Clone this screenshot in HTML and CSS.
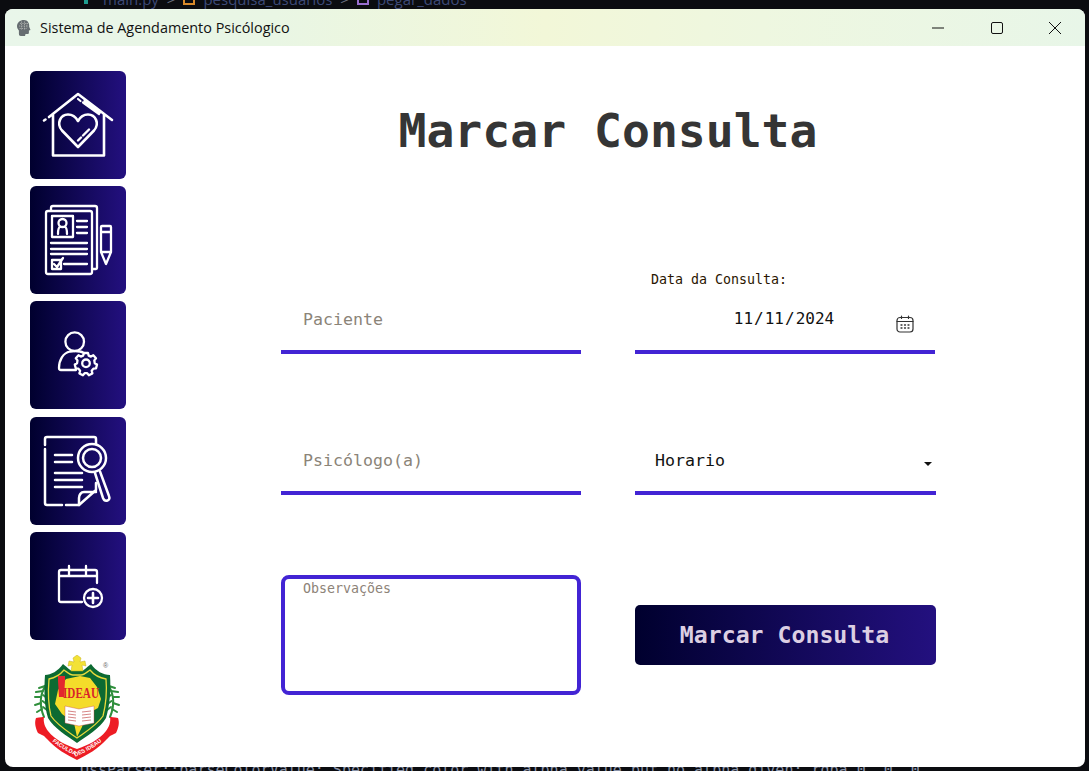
FILE: index.html
```html
<!DOCTYPE html>
<html lang="pt">
<head>
<meta charset="utf-8">
<title>Sistema de Agendamento Psicólogico</title>
<link rel="stylesheet" href="styles.css">
</head>
<body>
<div class="backdrop backdrop-top">
  <svg class="crumb-icon" viewBox="0 0 12 12"><path d="M2 1h8v5H7v5H3V7H2z" fill="#1f9d8f"/></svg>
  <span class="crumb crumb-main">main.py</span><span class="crumb-sep">&gt;</span>
  <svg class="crumb-icon" viewBox="0 0 12 12"><rect x="1" y="1" width="10" height="10" fill="none" stroke="#d98a2b" stroke-width="2"/></svg>
  <span class="crumb">pesquisa_usuarios</span><span class="crumb-sep">&gt;</span>
  <svg class="crumb-icon" viewBox="0 0 12 12"><rect x="1" y="1" width="10" height="10" fill="none" stroke="#9a6fd0" stroke-width="2"/></svg>
  <span class="crumb">pegar_dados</span>
</div>
<div class="backdrop backdrop-bottom">QssParser::parseColorValue: Specified color with alpha value but no alpha given: rgba 0, 0, 0</div>
<div class="window">
  <header class="titlebar">
    <svg class="app-icon" viewBox="0 0 14 16"><path d="M7 0C3 0 0 2.600 0 6.300c0 1.800.8 3 1.900 4.200V14c0 1.200.7 2 1.900 2H8l.5-2h1.900c1 0 1.500-.7 1.500-1.600v-1.800l1.600-.6-1.300-3.200C12.600 2.800 10.400 0 7 0z" fill="#666d71"/><path d="M3 3.500h8M2 6h9M2.500 8.500h7.500M4.500 1.500v8M7.500 1.500v8M10 3v5" stroke="#b3b6b2" stroke-width=".8" stroke-dasharray="1.300 1" fill="none"/></svg>
    <span class="title-text">Sistema de Agendamento Psicólogico</span>
    <div class="controls">
      <svg viewBox="0 0 12 12"><path d="M0 6h12" stroke="#111" stroke-width="1"/></svg>
      <svg viewBox="0 0 12 12"><rect x=".5" y=".5" width="11" height="11" rx="1.500" fill="none" stroke="#111" stroke-width="1"/></svg>
      <svg viewBox="0 0 12 12"><path d="M0 0l12 12M12 0L0 12" stroke="#111" stroke-width="1"/></svg>
    </div>
  </header>
  <div class="body">
    <nav class="sidebar">
      <button class="nav-btn" aria-label="Início">
        <svg class="nav-icon" viewBox="0 0 96 108" stroke-width="2.600">
          <path d="M14 49.500l1.500-1M19 46L48 23l34 26M23 43.500V84.500h51V43"/>
          <path d="M48 28l2.500 2M53 31.500L69 43M54.500 30L70 41.500" stroke-width="2.200"/>
          <path d="M48 76L32 59.500c-6-7-1.500-16 6-16 4.500 0 7.500 2 10 6.500 2.500-4.500 5.500-6.500 10-6.500 7.500 0 12 9 6 16z"/>
          <path d="M48 69.500l3-3M53 64.500l6-6" stroke-width="2.400"/>
        </svg>
      </button>
      <button class="nav-btn" aria-label="Pacientes">
        <svg class="nav-icon" viewBox="0 0 96 108" stroke-width="2.300">
          <path d="M21 24v-2c0-1 .7-2 2-2h42c1.300 0 2 1 2 2v60c0 .8-.5 1-1 1h-3"/>
          <path d="M16 27c0-1.200.8-2 2-2h42c1.200 0 2 .8 2 2v59c0 1.200-.8 2-2 2H18c-1.200 0-2-.8-2-2zM16 70v-4"/>
          <rect x="22" y="30" width="21" height="21"/>
          <circle cx="32.500" cy="37" r="4"/>
          <path d="M28 48c0-4 .5-6.500 2-7M37 48c0-4-.5-6.500-2-7"/>
          <path d="M47 35h10M47 41h10M47 47h10M21 57h36M21 63h36M21 68h36M34 78h23"/>
          <path d="M22 74h9v9h-9zM24 78l3 3 6-9"/>
          <path d="M72 40h8c.5 0 1 .5 1 1v25l-5 12-5-12V41c0-.5.500-1 1-1zM71 46h10M71 66h10"/>
        </svg>
      </button>
      <button class="nav-btn" aria-label="Usuários">
        <svg class="nav-icon" viewBox="0 0 96 108" stroke-width="2.300">
          <circle cx="44.700" cy="40.700" r="9.300"/>
          <path d="M46 69H31c-1.200 0-2-.8-2-2 0-8 4-15 11-16.500 3-.5 7-.5 10 0 1.500.3 3 1 4 1.500"/>
          <circle cx="56" cy="62.300" r="3.800"/>
          <path d="M54 52h4l.7 2.600 2.300 1 2.300-1.300 2.700 3-1.700 2.100.4 2.800 2.300 1.400-1 3.800-2.600.2-1.700 2.200.7 2.600-3.500 1.800-1.700-2-2.600 0-1.700 2-3.500-1.800.7-2.600-1.700-2.200-2.600-.2-1-3.800 2.300-1.400.4-2.800-1.700-2.100 2.700-3 2.300 1.300 2.300-1z"/>
        </svg>
      </button>
      <button class="nav-btn" aria-label="Pesquisa">
        <svg class="nav-icon" viewBox="0 0 96 108" stroke-width="2.500">
          <path d="M15 28v-6c0-1.200.8-2 2-2h47c1.300 0 2 .8 2 2v5M15 32v54c0 1.200.8 2 2 2h15M36 88h13l17-15v-7"/>
          <path d="M49 88v-7c0-3 2-6 5-6h12"/>
          <path d="M25 38h17M25 45h17M25 56h27M25 63h27M25 70h27"/>
          <circle cx="62" cy="41" r="14"/><circle cx="62" cy="41" r="9"/>
          <path d="M65 56l8 25c1 2.500 3 3 4.500 2.500s2.500-2 1.500-4.500L70 54.500"/>
        </svg>
      </button>
      <button class="nav-btn" aria-label="Marcar consulta">
        <svg class="nav-icon" viewBox="0 0 96 108" stroke-width="2.300">
          <path d="M52 70H31c-1.200 0-2-.8-2-2V40c0-1.200.8-2 2-2h34c1.200 0 2 .8 2 2v11M29 44h38M39 34v9M56 34v9"/>
          <circle cx="63" cy="66" r="9"/>
          <path d="M63 61v10M58 66h10" stroke-width="2.600"/>
        </svg>
      </button>
      <svg class="logo" viewBox="0 0 90 108">
        <g class="wreath">
          <path d="M14 28C7 38 6 50 11 62M74 28c7 10 8 22 3 34"/>
          <path d="M12 31l-6 2M10 36l-7 1M8 42l-6 0M8 48l-6 2M9 54l-5 3M12 34l3 4M10 40l4 3M9.500 46l4 3M10 52l4 3M76 31l6 2M78 36l7 1M80 42l6 0M80 48l6 2M79 54l5 3M76 34l-3 4M78 40l-4 3M78.500 46l-4 3M78 52l-4 3"/>
        </g>
        <path d="M12 20c6 0 13-4 18-11 3 2 7 7 10 7h8c3 0 7-5 10-7 5 7 12 11 19 11 1 14 0 30-4 43-6 10-19 18-29 25-10-7-23-15-29-25-4-13-4-29-3-43z" fill="#0c6a32"/>
        <path d="M16 24c5-1 11-4 15-9 3 2 6 5 9 5h8c3 0 6-3 9-5 4 5 10 8 16 9 1 12 0 25-3 37-6 9-16 15-26 22-10-7-20-13-26-22-3-12-3-25-2-37z" fill="none" stroke="#e9da3c" stroke-width="1.300"/>
        <path d="M44 0l4 3-1 4 5-1 1 5-4-1 1 6h-12l1-6-4 1 1-5 5 1-1-4z" fill="#f3e236" stroke="#c7b021" stroke-width=".5"/>
        <path d="M33 24l14-3 10 2 7 9 4 12-3 9-13 7-3 12-5 10-3-14-12-9-7-10 3-14z" fill="#f4dc2a"/>
        <path d="M25 21h7v5l-1 16h-5l-1-16z" fill="#e3282e"/>
        <text x="30" y="43" class="logo-word" textLength="36" lengthAdjust="spacingAndGlyphs">IDEAU</text>
        <path d="M32 51l14 3 15-3v17l-15 3-14-3z" fill="#fff" stroke="#c44" stroke-width=".4"/>
        <path d="M35 56l8 1M35 59l8 1M35 62l8 1M35 65l8 1M49 57l9-1M49 60l9-1M49 63l9-1M49 66l9-1" stroke="#b33" stroke-width=".6"/>
        <path d="M3 63c4-1 7-1 8-1-1 5 1 10 4 14 7 9 18 14 29 18 11-4 22-9 29-18 3-4 5-9 4-14 1 0 4 0 8 1 2 5 0 11-2 15l-6 3-3 3c-9 10-20 16-30 21-10-5-21-11-30-21l-3-3-6-3c-2-4-4-10-2-15z" fill="#ed1c24"/>
        <path id="ribbon" d="M13 81c9 9 20 15 31 20 11-5 22-11 31-20" fill="none"/>
        <text class="logo-ribbon"><textPath href="#ribbon" startOffset="50%" text-anchor="middle">FACULDADES IDEAU</textPath></text>
        <text x="70" y="13" class="logo-reg">®</text>
      </svg>
    </nav>
    <main class="content">
      <h1 class="page-title">Marcar Consulta</h1>
      <form class="form">
        <div class="field"><input class="input" type="text" placeholder="Paciente"></div>
        <div class="field date-field">
          <label class="date-label" for="data">Data da Consulta:</label>
          <input class="input input-date" id="data" type="date" value="2024-11-11">
          <svg class="cal-icon" viewBox="0 0 18 18" fill="none" stroke="#333" stroke-width="1.200" stroke-linecap="round"><rect x="1" y="2.500" width="16" height="14.500" rx="3"/><path d="M1 6.500h16M5.500 1v2.500M12.500 1v2.500"/><path d="M5 10h1M8.500 10h1M12 10h1M5 13h1M8.500 13h1M12 13h1" stroke-width="1.300"/></svg>
        </div>
        <div class="field"><input class="input" type="text" placeholder="Psicólogo(a)"></div>
        <div class="field select-field">
          <select class="input input-select"><option>Horario</option></select>
          <span class="caret"></span>
        </div>
        <textarea class="notes" placeholder="Observações"></textarea>
        <button class="submit" type="button">Marcar Consulta</button>
      </form>
    </main>
  </div>
</div>
</body>
</html>
```
FILE: styles.css
```css
* { box-sizing: border-box; }
html, body { height: 100%; }
body {
  margin: 0;
  background: #0b0c10;
  padding: 9px 4px 4px 5px;
  overflow: hidden;
  font-family: "DejaVu Sans Mono", monospace;
}
.backdrop {
  position: absolute;
  color: #3d4a78;
  white-space: nowrap;
}
.backdrop-top {
  top: -11px;
  left: 81px;
  display: flex;
  align-items: center;
  font: 15px "Open Sans", sans-serif;
}
.crumb-icon { width: 12px; height: 12px; margin-right: 8px; }
.crumb-main { margin-left: 2px; }
.crumb-sep { margin: 0 8px; color: #6a7080; }
.backdrop-bottom {
  bottom: -8px;
  left: 80px;
  font-size: 15px;
  color: #8a93a8;
}
.window {
  position: relative;
  height: 100%;
  display: flex;
  flex-direction: column;
  background: #fff;
  border-radius: 8px;
  overflow: hidden;
}
.titlebar {
  height: 37px;
  flex: none;
  display: flex;
  align-items: center;
  padding-left: 12px;
  background: linear-gradient(90deg, #e9f6ea 0%, #e9f6e4 25%, #f2f7d8 50%, #eef7e0 70%, #e8f6e8 100%);
}
.app-icon { width: 14px; height: 16px; margin-right: 9px; }
.title-text {
  font-family: "Open Sans", sans-serif;
  font-size: 14.400px;
  color: #111;
}
.controls {
  margin-left: auto;
  display: flex;
  align-items: center;
  gap: 46.500px;
  padding-right: 24px;
}
.controls svg { width: 12px; height: 12px; display: block; }
.body { flex: 1; display: flex; min-height: 0; }
.sidebar {
  width: 121px;
  flex: none;
  padding: 25px 0 0 25px;
  display: flex;
  flex-direction: column;
  gap: 7.200px;
}
.nav-btn {
  width: 96px;
  height: 108px;
  flex: none;
  padding: 0;
  border: 0;
  border-radius: 6px;
  background: linear-gradient(90deg, #00002e 0%, #23107f 100%);
}
.nav-icon {
  display: block;
  width: 96px;
  height: 108px;
  fill: none;
  stroke: #fff;
  stroke-linecap: round;
  stroke-linejoin: round;
}
.logo { width: 90px; height: 108px; margin: 7.800px 0 0 3px; flex: none; }
.wreath { fill: none; stroke: #2f8f3c; stroke-width: 2; stroke-linecap: round; }
.logo-word { font: 700 14px "Liberation Serif", serif; fill: #d9232a; }
.logo-ribbon { font: 700 5.600px "Liberation Sans", sans-serif; fill: #fff; }
.logo-reg { font: 7px "Liberation Sans", sans-serif; fill: #666; }
.content { flex: 1; min-width: 0; padding-left: 155px; display: flex; flex-direction: column; }
.page-title {
  margin: 50px 0 0;
  width: 654px;
  font-size: 46.400px;
  font-weight: 700;
  line-height: 70px;
  text-align: center;
  color: #353535;
}
.form {
  margin-top: 105px;
  display: grid;
  grid-template-columns: 300px 301px;
  grid-template-rows: 83px 141px 200px;
  column-gap: 54px;
}
.field { position: relative; display: flex; flex-direction: column; justify-content: flex-end; }
.input {
  width: 100%;
  height: 62px;
  border: 0;
  border-bottom: 4px solid #4224d4;
  border-radius: 0;
  padding: 0 0 4px 22px;
  background: transparent;
  font: 400 16.600px "DejaVu Sans Mono", monospace;
  color: #111;
  outline: none;
  appearance: none;
}
.input::placeholder { color: #8b8478; opacity: 1; }
.date-field .input { width: 300px; }
.date-label {
  position: absolute;
  top: 0;
  left: 16px;
  font-size: 13.300px;
  line-height: 18px;
  color: #2a1500;
}
.input-date { text-align: center; padding: 0 2px 5px 0; font-size: 16px; }
.input-date::-webkit-calendar-picker-indicator { display: none; }
.cal-icon { position: absolute; left: 261px; bottom: 21px; width: 18px; height: 18px; }
.input-select { padding-left: 20px; padding-bottom: 4px; }
.caret {
  position: absolute;
  right: 4px;
  bottom: 29px;
  border: 4px solid transparent;
  border-top-color: #111;
  border-bottom: 0;
}
.notes {
  align-self: end;
  width: 300px;
  height: 120px;
  border: 4px solid #4224d4;
  border-radius: 8px;
  padding: 1px 18px;
  resize: none;
  outline: none;
  font: 400 13.300px/18px "DejaVu Sans Mono", monospace;
}
.notes::placeholder { color: #8d8378; opacity: 1; }
.submit {
  align-self: end;
  height: 60px;
  margin-bottom: 30px;
  padding: 0 2px 2px 0;
  border: 0;
  border-radius: 5px;
  background: linear-gradient(90deg, #00002e 0%, #23107f 100%);
  color: #dccfe3;
  font: 700 23.200px "DejaVu Sans Mono", monospace;
}
```
